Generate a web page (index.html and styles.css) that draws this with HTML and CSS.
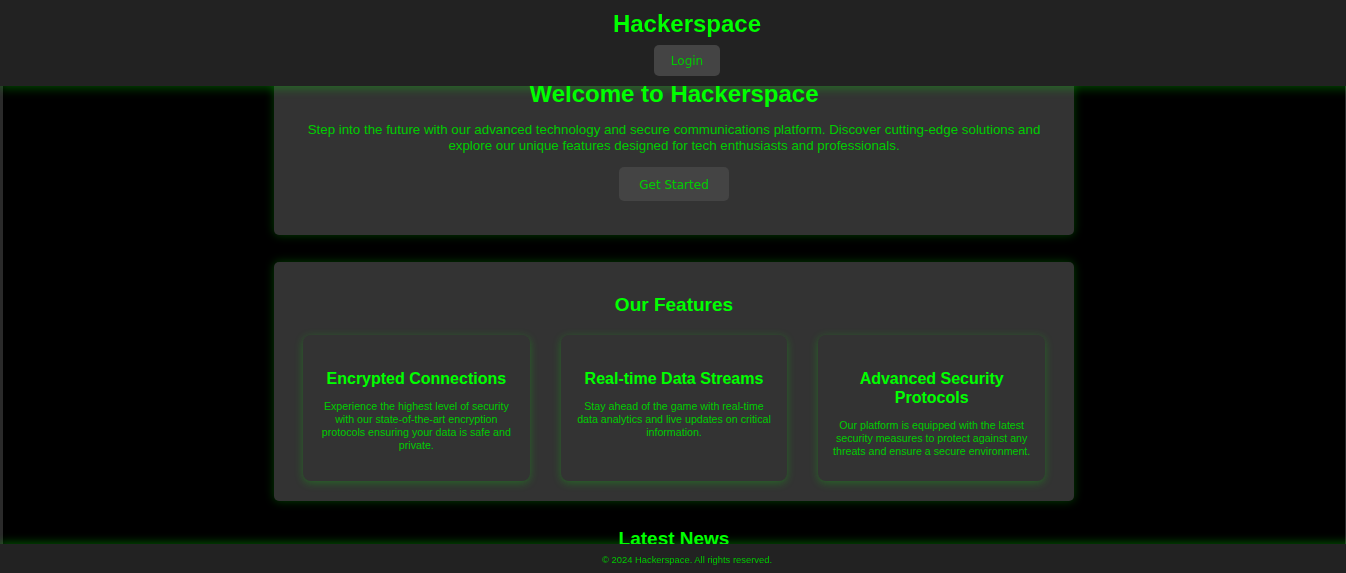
FILE: index.html
```html
<!DOCTYPE html>
<html lang="en">
<head>
<meta charset="utf-8">
<title>Hackerspace</title>
<link rel="stylesheet" href="styles.css">
</head>
<body>
<header class="site-header">
  <h1 class="brand">Hackerspace</h1>
  <button class="btn btn-login">Login</button>
</header>

<main class="page">
  <section class="panel hero">
    <h2 class="hero-title">Welcome to Hackerspace</h2>
    <p class="hero-text">Step into the future with our advanced technology and secure communications platform. Discover cutting-edge solutions and explore our unique features designed for tech enthusiasts and professionals.</p>
    <button class="btn btn-start">Get Started</button>
  </section>

  <section class="panel features">
    <h2 class="section-title">Our Features</h2>
    <div class="feature-grid">
      <div class="card">
        <h3 class="card-title">Encrypted Connections</h3>
        <p class="card-text">Experience the highest level of security with our state-of-the-art encryption protocols ensuring your data is safe and private.</p>
      </div>
      <div class="card">
        <h3 class="card-title">Real-time Data Streams</h3>
        <p class="card-text">Stay ahead of the game with real-time data analytics and live updates on critical information.</p>
      </div>
      <div class="card">
        <h3 class="card-title">Advanced Security Protocols</h3>
        <p class="card-text">Our platform is equipped with the latest security measures to protect against any threats and ensure a secure environment.</p>
      </div>
    </div>
  </section>

  <section class="news">
    <h2 class="section-title">Latest News</h2>
  </section>
</main>

<footer class="site-footer">
  <p class="copyright">&copy; 2024 Hackerspace. All rights reserved.</p>
</footer>
</body>
</html>
```

FILE: styles.css
```css
html, body {
  margin: 0;
  padding: 0;
}

body {
  background: #2a2a2a;
  font-family: "Liberation Sans", Arial, sans-serif;
  color: #00cc00;
}

.site-header {
  position: fixed;
  top: 0;
  left: 0;
  width: 100%;
  padding: 10px 14px 10px;
  background: #222;
  display: flex;
  flex-direction: column;
  align-items: center;
  gap: 7px;
  box-shadow: 0 2px 10px rgba(0, 255, 0, 0.3);
  z-index: 10;
}

.brand {
  margin: 0;
  font-size: 24px;
  line-height: 28px;
  font-weight: bold;
  color: #00ff00;
}

.btn {
  font-family: "DejaVu Sans", sans-serif;
  font-size: 12px;
  line-height: 14px;
  color: #00cc00;
  background: #444;
  border: none;
  border-radius: 5px;
}

.btn-login {
  padding: 8px 17px;
  height: 31px;
}

.btn-start {
  padding: 11px 20px 9px;
  height: 34px;
}

.page {
  margin: 0 1px 0 3px;
  background: #000;
  padding: 60px 0 23px;
  display: flex;
  flex-direction: column;
  align-items: center;
}

.panel {
  width: 800px;
  box-sizing: border-box;
  background: #333;
  border-radius: 5px;
  box-shadow: 0 0 10px rgba(0, 255, 0, 0.25);
  text-align: center;
}

.hero {
  padding: 20px 30px 34px;
}

.hero-title {
  margin: 0 0 14px;
  font-size: 24px;
  line-height: 28px;
  color: #00ff00;
}

.hero-text {
  margin: 0 0 13px;
  font-size: 13.33px;
  line-height: 16px;
}

.features {
  margin-top: 27px;
  padding: 32px 29px 20px;
}

.section-title {
  margin: 0;
  font-size: 19px;
  line-height: 22px;
  color: #00ff00;
}

.features .section-title {
  margin-bottom: 19px;
}

.feature-grid {
  display: grid;
  grid-template-columns: repeat(3, 1fr);
  gap: 31px;
}

.card {
  background: #333;
  border-radius: 8px;
  padding: 20px 14px;
  box-shadow: 0 2px 8px rgba(0, 255, 0, 0.25);
}

.card-title {
  margin: 14px 0 12px;
  font-size: 16px;
  line-height: 19px;
  color: #00ff00;
}

.card-text {
  margin: 0 0 3px;
  font-size: 10.67px;
  line-height: 13px;
}

.news {
  margin-top: 27px;
  text-align: center;
}

.site-footer {
  position: fixed;
  bottom: 0;
  left: 0;
  width: 100%;
  padding: 10px 14px 8px;
  background: #222;
  box-shadow: 0 -2px 8px rgba(0, 255, 0, 0.3);
  text-align: center;
  z-index: 10;
}

.copyright {
  margin: 0;
  font-size: 9.4px;
  line-height: 11px;
}
```
